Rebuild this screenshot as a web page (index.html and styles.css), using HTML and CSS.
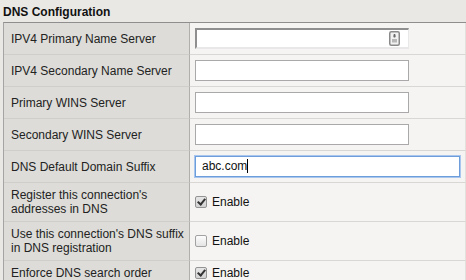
FILE: index.html
```html
<!DOCTYPE html>
<html>
<head>
<meta charset="utf-8">
<link rel="stylesheet" href="styles.css">
</head>
<body>
<div class="title">DNS Configuration</div>
<table class="cfg">
  <tr>
    <th>IPV4 Primary Name Server</th>
    <td>
      <div class="field inset">
        <svg class="keyicon" width="11" height="15" viewBox="0 0 11 15">
          <rect x="0.75" y="0.75" width="9.5" height="13.5" rx="1.5" fill="#f2f2f2" stroke="#8a8a8a" stroke-width="1.5"/>
          <path d="M5.5 3 L5.5 6.5" stroke="#6a6a6a" stroke-width="1.6"/>
          <path d="M4 5.5 L5.5 3.3 L7 5.5 Z" fill="#6a6a6a"/>
          <rect x="3" y="8" width="5" height="3.5" fill="#b8b8b8"/>
        </svg>
      </div>
    </td>
  </tr>
  <tr>
    <th>IPV4 Secondary Name Server</th>
    <td><div class="field"></div></td>
  </tr>
  <tr>
    <th>Primary WINS Server</th>
    <td><div class="field"></div></td>
  </tr>
  <tr>
    <th>Secondary WINS Server</th>
    <td><div class="field"></div></td>
  </tr>
  <tr>
    <th>DNS Default Domain Suffix</th>
    <td><div class="field wide focus">abc.com<span class="caret"></span></div></td>
  </tr>
  <tr>
    <th>Register this connection's addresses in DNS</th>
    <td><label class="chk"><span class="box on"></span>Enable</label></td>
  </tr>
  <tr>
    <th>Use this connection's DNS suffix in DNS registration</th>
    <td><label class="chk"><span class="box"></span>Enable</label></td>
  </tr>
  <tr>
    <th>Enforce DNS search order</th>
    <td><label class="chk"><span class="box on"></span>Enable</label></td>
  </tr>
</table>
</body>
</html>
```

FILE: styles.css
```css
html, body {
  margin: 0;
  padding: 0;
  background: #e9e8e5;
  font-family: "Liberation Sans", Arial, sans-serif;
  font-size: 12px;
  line-height: 14px;
  color: #222;
}
body {
  padding-left: 3px;
}
.title {
  font-weight: bold;
  color: #111;
  padding-top: 5px;
  height: 14px;
  margin-bottom: 3px;
}
.cfg {
  border-collapse: separate;
  border-spacing: 0;
  width: 463px;
  border-top: 1px solid #8e8e8e;
  border-left: 1px solid #a4a4a4;
}
.cfg th {
  width: 174px;
  text-align: left;
  font-weight: normal;
  background: #dddcd8;
  padding: 5px 4px 5px 7px;
  border-right: 1px solid #b0afac;
  border-bottom: 1px solid #cfcecb;
  vertical-align: middle;
  color: #222;
}
.cfg td {
  background: #f5f4f2;
  padding: 5px 0 5px 5px;
  border-bottom: 1px solid #d8d7d4;
  border-right: 1px solid #e2e1de;
  vertical-align: middle;
}
.field {
  box-sizing: border-box;
  width: 214px;
  height: 21px;
  background: #fff;
  border: 1px solid #a9a9a9;
  padding: 2px 6px;
  line-height: 15px;
  color: #111;
}
.field.inset {
  position: relative;
  border-top: 2px solid #8f8f8f;
  border-left: 2px solid #8f8f8f;
  border-right: 1px solid #e8e8e8;
  border-bottom: 2px solid #e8e8e8;
}
.keyicon {
  position: absolute;
  right: 8px;
  top: 1px;
}
.field.wide {
  width: 265px;
}
.field.focus {
  border: 1px solid #6e9ddc;
  box-shadow: 0 0 0 1px #a9c6ee;
}
.caret {
  display: inline-block;
  width: 1px;
  height: 14px;
  background: #000;
  vertical-align: -3px;
}
.chk {
  display: flex;
  align-items: center;
  gap: 5px;
  height: 14px;
  color: #111;
}
.box {
  box-sizing: border-box;
  width: 12px;
  height: 12px;
  border: 1px solid #a2a2a2;
  border-radius: 2px;
  background: linear-gradient(#fdfdfd, #e4e4e4);
  position: relative;
}
.box.on {
  background: linear-gradient(#e6e6e6, #d2d2d2);
  border-color: #939393;
}
.box.on::after {
  content: "";
  position: absolute;
  left: 3px;
  top: 0px;
  width: 3px;
  height: 6px;
  border-right: 2px solid #333;
  border-bottom: 2px solid #333;
  transform: rotate(40deg);
}
```
